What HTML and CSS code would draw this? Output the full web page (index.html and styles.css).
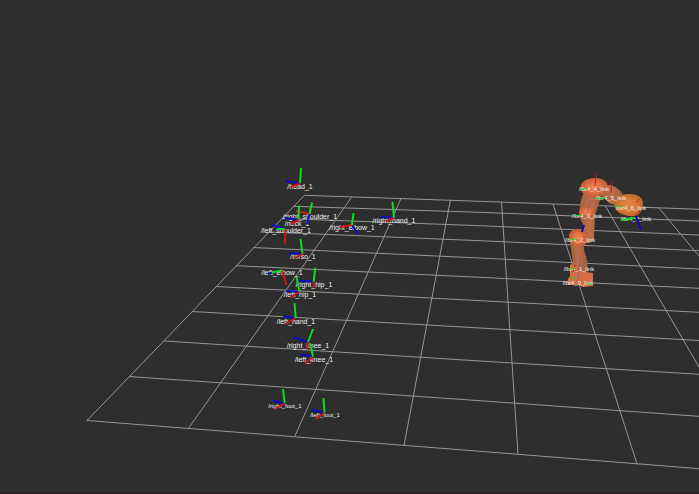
FILE: index.html
```
<!DOCTYPE html>
<html lang="en">
<head>
<meta charset="utf-8">
<title>Robot and skeleton frames</title>
<link rel="stylesheet" href="styles.css">
</head>
<body>
<main class="viewport">
<svg class="scene" viewBox="0 0 699 492" preserveAspectRatio="xMidYMid slice" role="img" aria-label="3D view of coordinate frames">
  <defs>
    <linearGradient id="link" x1="0" x2="1" y1="0" y2="0">
      <stop offset="0" stop-color="#a85c3a"/>
      <stop offset=".5" stop-color="#bb7049"/>
      <stop offset="1" stop-color="#a05a38"/>
    </linearGradient>
    <radialGradient id="joint">
      <stop offset="0" stop-color="#f8845a"/>
      <stop offset=".6" stop-color="#de6c40"/>
      <stop offset="1" stop-color="#bc6039"/>
    </radialGradient>
    <radialGradient id="wrist">
      <stop offset="0" stop-color="#e48a48"/>
      <stop offset=".6" stop-color="#d67a34"/>
      <stop offset="1" stop-color="#bd682d"/>
    </radialGradient>
  </defs>

  <!-- ground grid: depth rows, then columns -->
  <g class="grid">
    <path d="M304.5 195.3L480 201.3L699 209.3M293 206.3L480 212.3L699 221M282 218.5L480 225.7L699 235M268.4 232L480 240.7L699 250.7M253 247.5L480 258L699 269M236 265.7L480 277.3L699 288.3M216.7 286.5L480 300.7L699 312.3M192.6 311.5L480 328L699 340.5M164 341L480 361L699 374.3M129 376.5L480 400.7L699 416.3M87 420.5L480 451.3L699 468.7"/>
    <path d="M304.5 195.3L87 420.5M351.5 197.3L188 429M400.8 199L294.7 436.5M450.3 200.5L404 445.5M501.5 202L518 454.5M553 204L637 463.7M605 205.5L671.7 320L699 367M658 207L699 256"/>
  </g>

  <!-- robot arm -->
  <g class="arm">
    <path fill="url(#link)" d="M570 242L584 243Q583 250 586 256Q589 265 587 277L571 277L573 263Z"/>
    <path fill="#d46d43" d="M570 265Q573 262 576 267L586 272L593 273V286L583 287L578 285L568 285Q566 280 570 276Z"/>
    <path fill="url(#link)" d="M583 194L602 194L598 206L595 215L594 238Q592 244 586 243L582 233L583 224L579 216L580 204Z"/>
    <ellipse fill="url(#joint)" cx="587" cy="212" rx="8" ry="6"/>
    <path fill="url(#joint)" d="M569 234Q573 228 580 229Q586 230 587 236Q588 245 581 247Q573 248 569 240Z"/>
    <path fill="url(#link)" d="M602 185Q612 184 618 189Q625 193 623 202Q617 206 609 203Q604 198 600 195Z"/>
    <path fill="url(#joint)" d="M581 184Q586 177 598 178Q606 179 608 186Q608 194 599 195Q592 200 585 195Q579 191 581 184Z"/>
    <path fill="url(#wrist)" d="M614 204Q615 194 629 194Q642 194 643 203Q643 213 636 216Q622 217 616 210Z"/>
    <path class="shade" d="M587 213L591 200M578 279L580 255M595 187L601 191M612 196L618 200"/>
  </g>

  <g class="label">
    <text x="300" y="189">/head_1</text>
    <text x="310" y="219">/right_shoulder_1</text>
    <text x="297" y="226">/neck_1</text>
    <text x="286" y="233">/left_shoulder_1</text>
    <text x="352" y="230">/right_elbow_1</text>
    <text x="394" y="223">/right_hand_1</text>
    <text x="303" y="259">/torso_1</text>
    <text x="282" y="275">/left_elbow_1</text>
    <text x="296" y="324">/left_hand_1</text>
    <text x="314" y="287">/right_hip_1</text>
    <text x="300" y="297">/left_hip_1</text>
    <text x="308" y="348">/right_knee_1</text>
    <text x="314" y="362">/left_knee_1</text>
  </g>
  <g class="label label-small">
    <text x="285" y="408">/right_foot_1</text>
    <text x="325" y="417">/left_foot_1</text>
    <text x="594" y="191">/lbr4_4_link</text>
    <text x="611" y="200">/lbr4_5_link</text>
    <text x="631" y="210">/lbr4_6_link</text>
    <text x="636" y="221">/lbr4_7_link</text>
    <text x="587" y="218">/lbr4_3_link</text>
    <text x="580" y="242">/lbr4_2_link</text>
    <text x="579" y="271">/lbr4_1_link</text>
    <text x="578" y="285">/lbr4_0_link</text>
  </g>

  <!-- frame axes -->
  <path class="axis z" d="M298 183L286 181M309.5 214L307 224M298 219.5L285 218M284 228.500L272 225M352 225L358 234M393 217.500L380.500 217M301 253.500L289 253.500M272 272.500L268 274M312 281.500L298 280.500M298 291.500L286 291M294 317.500L283 316.500M308 342L294 337.500M312 356L300 355M283 403L273 400.500M323 412.500L312 410M636 216L641 230M584 225L582 232"/>
  <path class="axis x" d="M300 183.500L291 187M309.500 214L296 211M298.500 220L291 224M285.500 229L285 243.500M352 225L340 227M394 218L386 221.500M302.500 254L294.500 258.500M282 270.500L286.500 285M313.700 281.500V287.500M299.500 292L290.500 297.500M295.500 318L286 324M308 342L307 349M313 357L305 363.500M284.500 403.500L275 409M324.500 413L315.700 419"/>
  <path class="axis y" d="M300 183L301 168M309.500 214L312 202.500M298.500 219L299 205.500M285 229L277 229M352 225L353.500 213M394 217.500L392.500 202M302.500 253.500L300.500 239M282 270.500L271.500 272.500M313.700 281.500L315.300 267.700M299.500 291.500L296.500 277M295.700 317.500L294.500 303M308 342L313 329M313 356.500L310 343M284.700 403L283 389M324.500 412.500L323.500 398M635 218L622 220"/>
  <path class="axis x thin" d="M595 186L596 173M611 193L612 181M636 203L639 199M635 216L640 211M575 265L573 272"/>
  <path class="axis y thin" d="M588 188L580 190M606 198L596 199M582 215L574 216M577 239L569 240M575 268L569 269M576 279L570 277M587 284H593M622 207L615 206"/>
</svg>
</main>
</body>
</html>
```
FILE: styles.css
```
body {
  margin: 0;
  background: #2e2e2e;
}

.viewport {
  box-sizing: border-box;
  height: 100vh;
  border-bottom: 2px solid #2c2329;
}

.scene {
  display: block;
  width: 100%;
  height: 100%;
}

.grid {
  fill: none;
  stroke: #969696;
  stroke-width: 1;
}

.shade {
  fill: none;
  stroke: #8a6288;
  stroke-width: 1;
}

.label {
  fill: #f0f0f0;
  font-family: "Liberation Sans", Arial, sans-serif;
  font-size: 7px;
  text-anchor: middle;
}

.label-small {
  font-size: 6px;
}

.axis {
  fill: none;
  stroke-width: 2;
}

.x {
  stroke: #d41414;
}

.y {
  stroke: #10dc1c;
}

.z {
  stroke: #0b0bc4;
}

.thin {
  stroke-width: 1;
}
```
